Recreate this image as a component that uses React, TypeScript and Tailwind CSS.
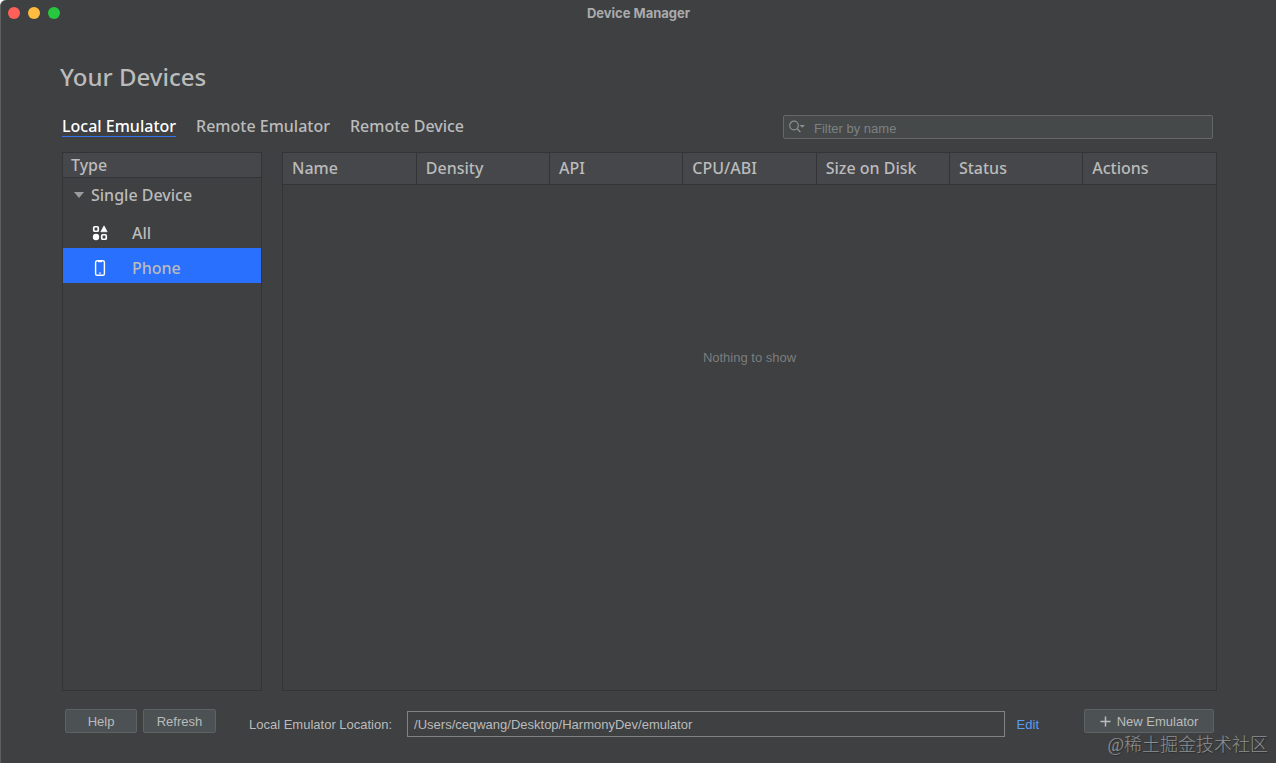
import React, { useState } from "react";

const tabs = ["Local Emulator", "Remote Emulator", "Remote Device"];
const columns = ["Name", "Density", "API", "CPU/ABI", "Size on Disk", "Status", "Actions"];

function AllIcon() {
  return (
    <svg width="16" height="16" viewBox="0 0 16 16" fill="none" stroke="#fff" strokeWidth="1.7">
      <rect x="1.75" y="1.75" width="4.5" height="4.5" rx="1" />
      <path d="M12 0.8 L15.2 6.8 H8.8 Z" fill="#fff" stroke="#fff" strokeWidth="0.6" strokeLinejoin="round" />
      <circle cx="4" cy="12" r="3.2" fill="#fff" stroke="none" />
      <rect x="9.75" y="9.75" width="4.5" height="4.5" rx="1" />
    </svg>
  );
}

function PhoneIcon() {
  return (
    <svg width="16" height="16" viewBox="0 0 16 16" fill="none" stroke="#fff">
      <rect x="3.6" y="0.7" width="8.8" height="14.6" rx="1.6" strokeWidth="1.4" />
      <path d="M6 1.6 H10" strokeWidth="1.2" />
      <path d="M7 13 H9" strokeWidth="1" />
    </svg>
  );
}

function SearchIcon() {
  return (
    <svg width="18" height="16" viewBox="0 0 18 16" fill="none" stroke="#8b8f90">
      <circle cx="6" cy="6.5" r="4.3" strokeWidth="1.2" />
      <path d="M9.2 9.7 L12.4 12.9" strokeWidth="1.4" />
      <path d="M11.5 6 H17 L14.25 8.8 Z" fill="#8b8f90" stroke="none" />
    </svg>
  );
}

const devices = [
  { name: "All", icon: <AllIcon /> },
  { name: "Phone", icon: <PhoneIcon /> },
];

export default function App() {
  const [activeTab, setActiveTab] = useState("Local Emulator");
  const [selected, setSelected] = useState("Phone");
  const [expanded, setExpanded] = useState(true);
  const [filter, setFilter] = useState("");
  const [location, setLocation] = useState("/Users/ceqwang/Desktop/HarmonyDev/emulator");

  return (
    <div className="relative flex min-h-screen flex-col rounded-tl-md border-l border-[#5d5f60] bg-[#3e4042] font-['Liberation_Sans',Arial,sans-serif] text-[13px] text-[#bbbbbb]">
      <header className="grid h-[26px] grid-cols-[1fr_auto_1fr] items-center px-[7px]">
        <div className="flex gap-2">
          <button type="button" aria-label="Close" className="size-3 rounded-full bg-[#fc6058]" />
          <button type="button" aria-label="Minimize" className="size-3 rounded-full bg-[#fdbc40]" />
          <button type="button" aria-label="Zoom" className="size-3 rounded-full bg-[#27c840]" />
        </div>
        <span className="pt-px font-['Inter',sans-serif] font-bold text-[#a9abac]">Device Manager</span>
      </header>

      <main className="flex grow flex-col pr-[59px] pl-[61px] font-['Noto_Sans','Open_Sans',sans-serif] text-base font-medium">
        <h1 className="mt-[31px] -ml-[2px] text-2xl leading-10">Your Devices</h1>

        <div className="mt-[18px] flex items-center justify-between pr-1">
          <nav className="flex gap-5">
            {tabs.map((tab) => (
              <button
                key={tab}
                type="button"
                onClick={() => setActiveTab(tab)}
                className={`border-b leading-[19px] ${
                  tab === activeTab ? "border-[#3574f0] text-white" : "border-transparent"
                }`}
              >
                {tab}
              </button>
            ))}
          </nav>
          <label className="flex h-6 w-[430px] items-center gap-2 rounded-xs border border-[#646868] bg-[#45494a] pl-1 font-['Liberation_Sans',Arial,sans-serif] text-[13px] font-normal">
            <SearchIcon />
            <input
              type="text"
              aria-label="Filter by name"
              placeholder="Filter by name"
              value={filter}
              onChange={(e) => setFilter(e.target.value)}
              className="min-w-0 grow bg-transparent pt-[3px] outline-none placeholder:text-[#7d8182]"
            />
          </label>
        </div>

        <div className="mt-[13px] flex grow gap-5">
          <aside className="w-[200px] shrink-0 border border-[#323435]">
            <div className="border-b border-[#323435] bg-[#45474a] px-2 leading-6">Type</div>
            <button
              type="button"
              onClick={() => setExpanded(!expanded)}
              className="flex h-[35px] w-full items-center gap-[7px] pb-[2px] pl-[11px]"
            >
              <svg width="10" height="6" viewBox="0 0 10 6" fill="#9a9c9d">
                <path d="M0 0 H10 L5 6 Z" />
              </svg>
              Single Device
            </button>
            {expanded &&
              devices.map((device) => (
                <button
                  key={device.name}
                  type="button"
                  onClick={() => setSelected(device.name)}
                  className={`flex h-[35px] w-full items-center gap-6 pt-1 pl-[29px] ${
                    device.name === selected ? "bg-[#2970ff]" : ""
                  }`}
                >
                  {device.icon}
                  {device.name}
                </button>
              ))}
          </aside>

          <section className="grow border border-[#323435]">
            <table className="w-full table-fixed border-collapse">
              <thead>
                <tr className="border-b border-[#323435] bg-[#45474a]">
                  {columns.map((column) => (
                    <th
                      key={column}
                      className="h-[31px] border-r border-[#323435] px-[9px] text-left font-medium last:border-r-0"
                    >
                      {column}
                    </th>
                  ))}
                </tr>
              </thead>
              <tbody>
                <tr>
                  <td
                    colSpan={columns.length}
                    className="pt-[163px] text-center font-['Liberation_Sans',Arial,sans-serif] text-[13px] font-normal text-[#7b7d7e]"
                  >
                    Nothing to show
                  </td>
                </tr>
              </tbody>
            </table>
          </section>
        </div>
      </main>

      <footer className="flex h-[72px] items-start pt-[18px] pr-[62px] pl-16">
        <div className="flex gap-[6px]">
          <button type="button" className="h-6 w-[72px] rounded-xs border border-[#5e6263] bg-[#4c5254] pt-[2px]">
            Help
          </button>
          <button type="button" className="h-6 w-[73px] rounded-xs border border-[#5e6263] bg-[#4c5254] pt-[2px]">
            Refresh
          </button>
        </div>
        <div className="mt-[2px] ml-[33px] flex grow items-center">
          <label htmlFor="location" className="pt-[2px]">
            Local Emulator Location:
          </label>
          <input
            id="location"
            type="text"
            value={location}
            onChange={(e) => setLocation(e.target.value)}
            className="mr-3 ml-[15px] h-[26px] min-w-0 grow border border-[#808283] bg-transparent px-[6px] outline-none"
          />
          <a href="#edit" className="pt-[2px] text-[#589df6]">
            Edit
          </a>
        </div>
        <button
          type="button"
          className="ml-[45px] flex h-6 w-[130px] items-center justify-center gap-[6px] rounded-xs border border-[#5e6263] bg-[#4c5254] pt-px"
        >
          <svg width="11" height="11" viewBox="0 0 11 11" stroke="#bbbbbb" strokeWidth="1.5">
            <path d="M5.5 0.5 V10.5 M0.5 5.5 H10.5" />
          </svg>
          New Emulator
        </button>
      </footer>

      <div className="pointer-events-none absolute right-2 bottom-1 font-['Liberation_Serif','Noto_Sans_CJK_SC',serif] text-lg font-light text-[#8d8f90] [text-shadow:1px_1px_1px_#2a2c2d]">
        @稀土掘金技术社区
      </div>
    </div>
  );
}
